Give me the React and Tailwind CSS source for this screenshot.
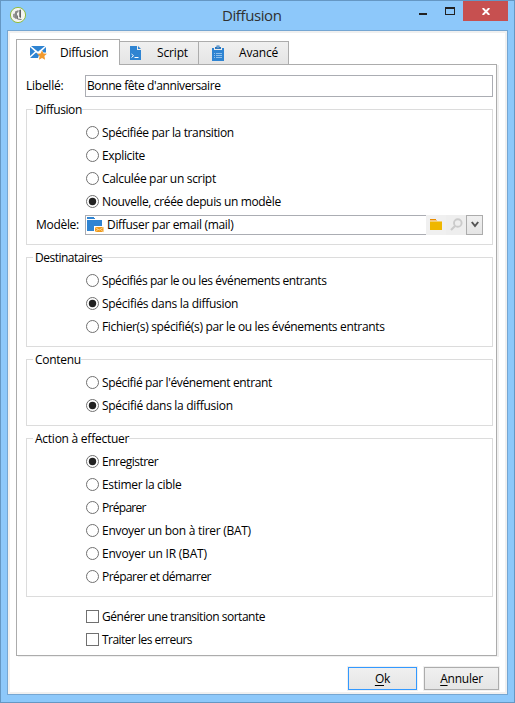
import React from "react";

function Radio({ label, on, cls = "" }) {
  return (
    <div className="flex h-[23px] items-center pl-[59px]">
      <svg width="13" height="13" viewBox="0 0 13 13" className="shrink-0">
        <circle cx="6.5" cy="6.5" r="6" fill="#fff" stroke="#707070" />
        {on && <circle cx="6.5" cy="6.5" r="3.7" fill="#212121" />}
      </svg>
      <span className={"ml-[3px] " + cls}>{label}</span>
    </div>
  );
}

function Group({ title, size, cls = "", children }) {
  return (
    <div className={"ml-[9px] w-[467px] shrink-0 border border-[#dcdcdc] " + size}>
      <div className={"-mt-[9px] mb-[2px] ml-[6px] h-[18px] w-fit bg-white pl-[2px] leading-[18px] " + cls}>{title}</div>
      {children}
    </div>
  );
}

function Check({ label, cls = "" }) {
  return (
    <div className="flex h-[23px] items-center pl-[69px]">
      <span className="h-[13px] w-[13px] border border-[#707070] bg-white" />
      <span className={"ml-[3px] " + cls}>{label}</span>
    </div>
  );
}

function MailIcon() {
  return (
    <svg width="17" height="14" viewBox="0 0 17 14">
      <path d="M1 0h14L8 5.800zM0 1l5 4.500L0 10zM16 1v5.500h-2.500L12 4.800zM0 12l6-5.500 2 1.600L9 9l-1 3z" fill="#2f84d2" />
      <path d="M12 4.500l1.500 3 3.500.3-2.600 2.300.7 3.700-3.100-1.800-3.100 1.800.7-3.700L7 7.800l3.500-.3z" fill="#f29a2e" />
    </svg>
  );
}

function ScriptIcon() {
  return (
    <svg width="11" height="14" viewBox="0 0 11 14">
      <path d="M0 0h7v4h4v10H0z" fill="#2f84d2" />
      <path d="M8 0l3 3H8z" fill="#2f84d2" />
      <path d="M1.500 8l2 1.700-2 1.800M4.500 11.500h4" fill="none" stroke="#fff" />
    </svg>
  );
}

function ClipboardIcon() {
  return (
    <svg width="12" height="16" viewBox="0 0 12 16">
      <path d="M0 3h2v2h8V3h2v13H0z" fill="#2f84d2" />
      <path d="M3 4V2h1.500V.500h3V2H9v2z" fill="#2f78bd" />
      <path d="M5.500 1.500h1v1h-1z" fill="#fff" />
      <path d="M2 8.500h1M4 8.500h6M2 10.500h1M4 10.500h6M2 12.500h1M4 12.500h6" stroke="#8fc0ec" />
    </svg>
  );
}

export default function App() {
  return (
    <div className="flex h-[703px] w-[515px] flex-col border border-[#6597c3] bg-[#8dc8fa] font-['Open_Sans','Noto_Sans',sans-serif] text-[12px] leading-[16px] text-black">
      <div className="flex h-[29px] shrink-0">
        <svg width="18" height="18" viewBox="0 0 18 18" className="ml-[8px] mt-[5px]">
          <circle cx="9" cy="9" r="7.600" fill="#f4f4f0" stroke="#92bd3d" />
          <path d="M4 8l3-1v6l-3-2z" fill="#999" />
          <path d="M6 5.500l3.500-1.500v2L8 7v6l-2-1z" fill="#888" />
          <path d="M10.500 4l1.200-.5V12l-1.200-1z" fill="#222" />
          <path d="M8.500 9.500v3.500l4 .5" fill="none" stroke="#777" />
        </svg>
        <div className="ml-[195px] mt-[4px] w-[64px] text-[15px] leading-[20px] tracking-[-0.4px] text-[#303030]">Diffusion</div>
        <svg width="8" height="2" className="ml-[133px] mt-[12px]"><path d="M0 0h8v2H0z" fill="#222" /></svg>
        <span className="ml-[18px] mt-[6px] h-[8px] w-[10px] border border-t-2 border-[#222]" />
        <div className="ml-[8px] flex h-[20px] w-[45px] items-center justify-center bg-[#c75050]">
          <svg width="8" height="7" viewBox="0 0 8 7"><path d="M.7 0l6.600 7M7.300 0L.7 7" stroke="#fff" strokeWidth="1.900" /></svg>
        </div>
      </div>
      <div className="ml-[6px] h-[665px] w-[501px] shrink-0 border border-[#75a6d2] bg-[#f0f0f0] p-[2px]">
        <div className="flex h-full flex-col bg-white pl-[6px] pt-[6px]">
          <div className="z-10 -mb-px flex h-[26px] shrink-0 items-end">
            <div className="flex h-[26px] w-[104px] items-center border border-b-0 border-[#acacac] bg-white pl-[13px]">
              <MailIcon />
              <span className="ml-[13px] tracking-[-0.25px]">Diffusion</span>
            </div>
            <div className="flex h-[24px] w-[79px] items-center border border-l-0 border-[#acacac] bg-gradient-to-b from-[#f0f0f0] to-[#e5e5e5] pl-[10px]">
              <ScriptIcon />
              <span className="ml-[16px] tracking-[-0.15px]">Script</span>
            </div>
            <div className="flex h-[24px] w-[90px] items-center border border-l-0 border-[#acacac] bg-gradient-to-b from-[#f0f0f0] to-[#e5e5e5] pl-[13px]">
              <ClipboardIcon />
              <span className="ml-[15px] tracking-[-0.15px]">Avancé</span>
            </div>
          </div>
          <div className="flex h-[592px] w-[481px] shrink-0 flex-col border border-[#acacac] bg-white shadow-[2px_1px_0_#f0f0f0]">
            <div className="mt-[10px] flex h-[22px] shrink-0 items-center pl-[9px]">
              <span className="w-[59px] tracking-[-0.25px]">Libellé:</span>
              <div className="h-[22px] w-[408px] border border-[#abadb3] pl-[1px] leading-[19px] tracking-[-0.4px]">Bonne fête d'anniversaire</div>
            </div>
            <div className="h-[12px] shrink-0" />
            <Group title="Diffusion" size="h-[136px]" cls="tracking-[-0.4px]">
              <Radio label="Spécifiée par la transition" cls="tracking-[-0.37px]" />
              <Radio label="Explicite" cls="tracking-[-0.35px]" />
              <Radio label="Calculée par un script" cls="tracking-[-0.32px]" />
              <Radio label="Nouvelle, créée depuis un modèle" on cls="tracking-[-0.35px]" />
              <div className="flex h-[23px] items-center pl-[9px]">
                <span className="w-[49px] tracking-[-0.3px]">Modèle:</span>
                <div className="flex h-[20px] w-[341px] items-center border border-r-0 border-[#abadb3] pl-[1px]">
                  <svg width="17" height="16" viewBox="0 0 17 16">
                    <path d="M0 0h7v1h1v1H0zM0 3h15v6H7v5H0z" fill="#2f84d2" />
                    <path d="M8 10h8.500v5H8z" fill="#f09a1a" />
                    <path d="M8 10.300l4.200 2.700 4.300-2.700M8 15l3-2.500M16.500 15l-3-2.500" fill="none" stroke="#fff2da" strokeWidth=".6" />
                  </svg>
                  <span className="ml-[3px] tracking-[-0.31px]">Diffuser par email (mail)</span>
                </div>
                <div className="flex h-[20px] w-[20px] items-center justify-center bg-[#f0f0f0]">
                  <svg width="12" height="11" viewBox="0 0 12 11">
                    <path d="M0 0h6v1H0z" fill="#e88b00" /><path d="M0 1h7v1H0z" fill="#f5c684" /><path d="M0 2h12v1H0z" fill="#f4cf70" /><path d="M0 3h12v8H0z" fill="#efb700" />
                  </svg>
                </div>
                <div className="flex h-[20px] w-[20px] items-center justify-center bg-[#eeeeee]">
                  <svg width="13" height="13" viewBox="0 0 13 13" fill="none" stroke="#cbcbcb">
                    <circle cx="7.800" cy="5" r="3.800" strokeWidth="1.900" /><path d="M5 8l-4 4" strokeWidth="2.200" />
                  </svg>
                </div>
                <div className="flex h-[20px] w-[17px] items-center justify-center border border-[#acacac] bg-gradient-to-b from-[#f0f0f0] to-[#e5e5e5]">
                  <svg width="8" height="7" viewBox="0 0 8 7"><path d="M.8 1L4 5 7.200 1" fill="none" stroke="#555" strokeWidth="2" /></svg>
                </div>
              </div>
            </Group>
            <div className="h-[12px] shrink-0" />
            <Group title="Destinataires" size="h-[90px]" cls="tracking-[-0.5px]">
              <Radio label="Spécifiés par le ou les événements entrants" cls="tracking-[-0.42px]" />
              <Radio label="Spécifiés dans la diffusion" on cls="tracking-[-0.3px]" />
              <Radio label="Fichier(s) spécifié(s) par le ou les événements entrants" cls="tracking-[-0.34px]" />
            </Group>
            <div className="h-[12px] shrink-0" />
            <Group title="Contenu" size="h-[67px]" cls="tracking-[-0.3px]">
              <Radio label="Spécifié par l'événement entrant" cls="tracking-[-0.37px]" />
              <Radio label="Spécifié dans la diffusion" on cls="tracking-[-0.3px]" />
            </Group>
            <div className="h-[12px] shrink-0" />
            <Group title="Action à effectuer" size="h-[159px]" cls="tracking-[-0.25px]">
              <Radio label="Enregistrer" on cls="tracking-[-0.5px]" />
              <Radio label="Estimer la cible" cls="tracking-[-0.3px]" />
              <Radio label="Préparer" cls="tracking-[-0.7px]" />
              <Radio label="Envoyer un bon à tirer (BAT)" cls="tracking-[-0.28px]" />
              <Radio label="Envoyer un IR (BAT)" cls="tracking-[-0.21px]" />
              <Radio label="Préparer et démarrer" cls="tracking-[-0.55px]" />
            </Group>
            <div className="h-[8px] shrink-0" />
            <Check label="Générer une transition sortante" cls="tracking-[-0.48px]" />
            <Check label="Traiter les erreurs" cls="tracking-[-0.53px]" />
          </div>
          <div className="mt-[11px] flex h-[23px] shrink-0 justify-end pr-[6px]">
            <div className="w-[69px] border border-[#3399ff] bg-gradient-to-b from-[#f0f0f0] to-[#e5e5e5] text-center leading-[21px] tracking-[-0.2px] shadow-[0_0_0_1px_#f0f0f0]"><span className="underline underline-offset-2">O</span>k</div>
            <div className="ml-[7px] w-[75px] border border-[#acacac] bg-gradient-to-b from-[#f0f0f0] to-[#e5e5e5] text-center leading-[21px] tracking-[-0.25px] shadow-[0_0_0_1px_#f0f0f0]"><span className="underline underline-offset-2">A</span>nnuler</div>
          </div>
        </div>
      </div>
    </div>
  );
}
